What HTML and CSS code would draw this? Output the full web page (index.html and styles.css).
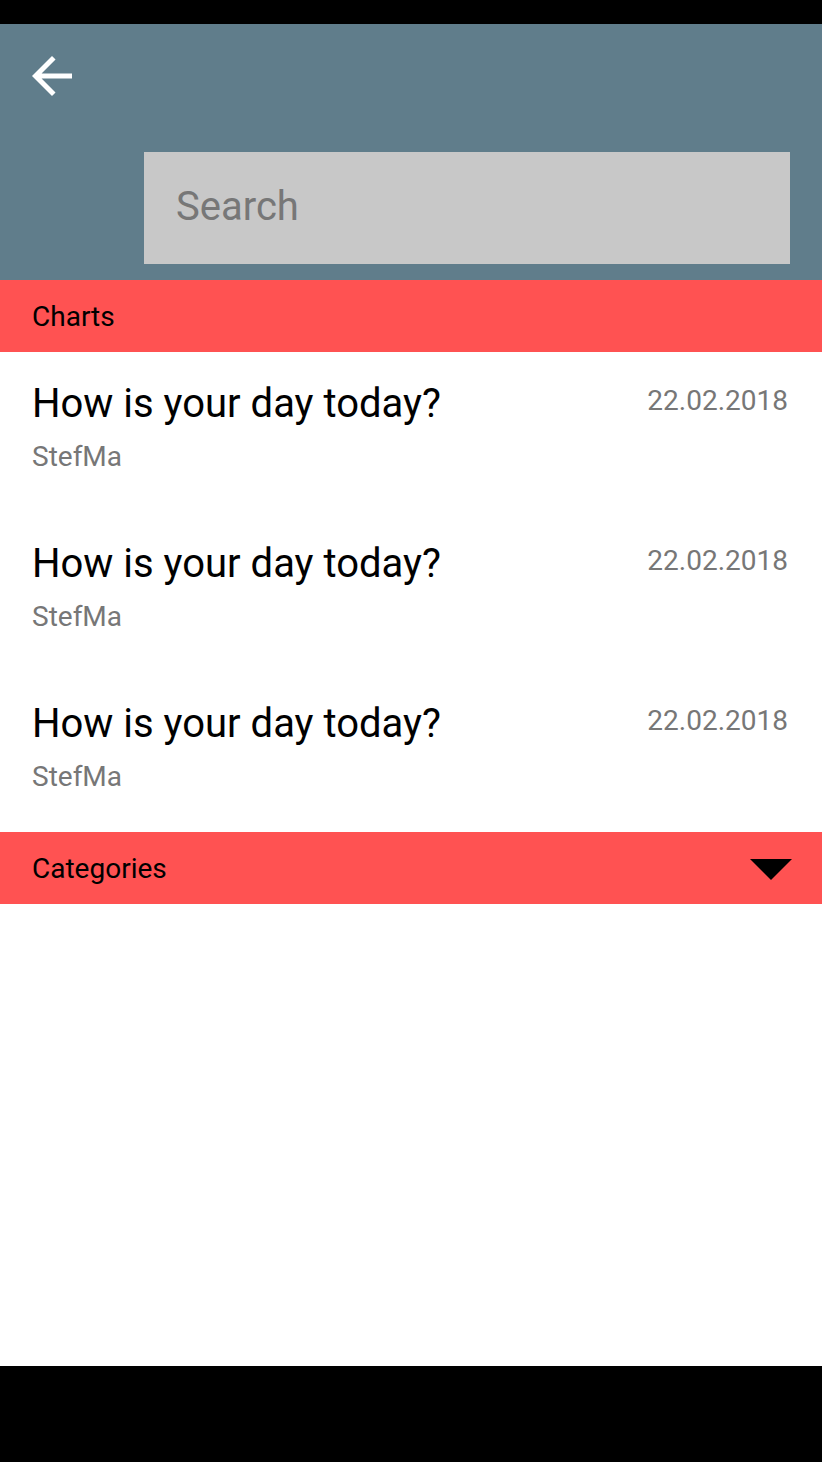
FILE: index.html
```html
<!DOCTYPE html>
<html lang="en">
<head>
<meta charset="utf-8">
<title>Search</title>
<link rel="stylesheet" href="styles.css">
</head>
<body>
<div class="screen">
  <div class="status-bar"></div>
  <header class="app-header">
    <div class="toolbar">
      <button class="back-btn" aria-label="Back">
        <svg class="back-icon" viewBox="0 0 24 24" width="60" height="60"><path d="M20 11H7.83l5.59-5.59L12 4l-8 8 8 8 1.41-1.41L7.83 13H20v-2z" fill="#ffffff"/></svg>
      </button>
    </div>
    <div class="search-row">
      <input class="search-input" type="text" placeholder="Search">
    </div>
  </header>
  <main class="content">
    <div class="section-bar"><span>Charts</span></div>
    <ul class="chart-list">
      <li class="chart-item">
        <div class="chart-text">
          <div class="chart-title">How is your day today?</div>
          <div class="chart-author">StefMa</div>
        </div>
        <div class="chart-date">22.02.2018</div>
      </li>
      <li class="chart-item">
        <div class="chart-text">
          <div class="chart-title">How is your day today?</div>
          <div class="chart-author">StefMa</div>
        </div>
        <div class="chart-date">22.02.2018</div>
      </li>
      <li class="chart-item">
        <div class="chart-text">
          <div class="chart-title">How is your day today?</div>
          <div class="chart-author">StefMa</div>
        </div>
        <div class="chart-date">22.02.2018</div>
      </li>
    </ul>
    <div class="section-bar"><span>Categories</span>
      <svg class="drop-icon" viewBox="7 10 10 5" width="42" height="21"><path d="M7 10l5 5 5-5z" fill="#000000"/></svg>
    </div>
  </main>
  <div class="nav-bar"></div>
</div>
</body>
</html>
```
FILE: styles.css
```css
html, body {
  margin: 0;
  padding: 0;
}
body {
  font-family: Roboto, "Noto Sans", "Liberation Sans", sans-serif;
  background: #ffffff;
}
.screen {
  width: 822px;
  height: 1462px;
  display: flex;
  flex-direction: column;
  overflow: hidden;
}
.status-bar {
  height: 24px;
  background: #000000;
  flex: none;
}
.app-header {
  background: #607d8b;
  height: 256px;
  flex: none;
  display: flex;
  flex-direction: column;
}
.toolbar {
  height: 104px;
  display: flex;
  align-items: center;
  padding-left: 22px;
}
.back-btn {
  border: 0;
  background: transparent;
  padding: 0;
  margin: 0;
  width: 60px;
  height: 60px;
  display: block;
}
.back-icon {
  display: block;
}
.search-row {
  margin-top: 24px;
  padding: 0 32px 0 144px;
}
.search-input {
  display: block;
  box-sizing: border-box;
  width: 100%;
  height: 112px;
  border: 0;
  outline: none;
  margin: 0;
  background: #c8c8c8;
  padding: 0 32px 4px 32px;
  font-family: Roboto, "Noto Sans", "Liberation Sans", sans-serif;
  font-size: 40px;
  color: #222222;
}
.search-input::placeholder {
  color: #777777;
  opacity: 1;
}
.content {
  flex: 1;
  background: #ffffff;
}
.section-bar {
  height: 72px;
  background: #ff5252;
  display: flex;
  align-items: center;
  justify-content: space-between;
  padding: 0 30px 0 32px;
  font-size: 28px;
  color: #000000;
}
.drop-icon {
  display: block;
  margin-top: 2px;
}
.chart-list {
  list-style: none;
  margin: 0;
  padding: 0;
}
.chart-item {
  height: 160px;
  box-sizing: border-box;
  padding: 28px 34px 0 32px;
  display: flex;
  justify-content: space-between;
  align-items: flex-start;
}
.chart-title {
  font-size: 40px;
  line-height: 47px;
  color: #000000;
}
.chart-author {
  margin-top: 13px;
  font-size: 28px;
  line-height: 33px;
  color: #777777;
}
.chart-date {
  margin-top: 4px;
  font-size: 28px;
  line-height: 33px;
  color: #777777;
}
.nav-bar {
  height: 96px;
  background: #000000;
  flex: none;
}
```
